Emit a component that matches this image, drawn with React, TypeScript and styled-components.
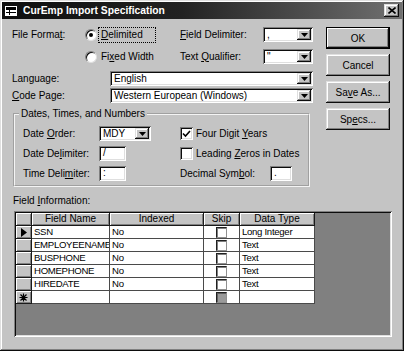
import React from 'react';
import styled, { createGlobalStyle } from 'styled-components';

const FACE = '#c4c4c4';
const SHADOW = '#808080';
const DARK = '#0c0c0c';
const LIGHT = '#dfdfdf';
const WHITE = '#ffffff';

const raised = `box-shadow: inset -1px -1px ${DARK}, inset 1px 1px ${LIGHT}, inset -2px -2px ${SHADOW}, inset 2px 2px ${WHITE};`;
const sunken = `box-shadow: inset 1px 1px ${SHADOW}, inset -1px -1px ${WHITE}, inset 2px 2px ${DARK}, inset -2px -2px ${LIGHT};`;

const GlobalStyle = createGlobalStyle`
  html, body {
    margin: 0;
    padding: 0;
    background: ${FACE};
  }
  body {
    font-family: "Liberation Sans", Arial, sans-serif;
    font-size: 10px;
    color: #000;
  }
  * {
    box-sizing: border-box;
  }
`;

const Window = styled.div`
  width: 404px;
  height: 351px;
  padding: 2px;
  background: ${FACE};
  display: flex;
  flex-direction: column;
  ${raised}
`;

const TitleBar = styled.div`
  height: 17px;
  display: flex;
  align-items: center;
  padding: 0 3px 0 3px;
  background: linear-gradient(to right, #0e0e0e 0%, #222 45%, #707070 100%);
  color: ${WHITE};
  font-weight: bold;
  font-size: 10.3px;
  gap: 6px;

  .title {
    flex: 1;
    white-space: nowrap;
  }
`;

const CloseButton = styled.div`
  width: 15px;
  height: 13px;
  background: ${FACE};
  display: flex;
  align-items: center;
  justify-content: center;
  ${raised}
`;

const Body = styled.div`
  flex: 1;
  display: flex;
  flex-direction: column;
  padding: 8px 10px 0 10px;
`;

const TopArea = styled.div`
  display: flex;
  justify-content: space-between;
  align-items: flex-start;
`;

const LeftPanel = styled.div`
  width: 301px;
  display: flex;
  flex-direction: column;
`;

const FormatGrid = styled.div`
  display: grid;
  grid-template-columns: 73px 95px 83px 50px;
  grid-auto-rows: 15px;
  row-gap: 7px;
  align-items: center;
`;

const Label = styled.span`
  white-space: nowrap;
  line-height: 12px;
`;

const RadioRow = styled.div`
  display: flex;
  align-items: center;
`;

const RadioCircle = styled.span<{ checked?: boolean }>`
  width: 12px;
  height: 12px;
  border-radius: 50%;
  background: ${WHITE};
  border: 1px solid ${SHADOW};
  border-right-color: ${LIGHT};
  border-bottom-color: ${LIGHT};
  box-shadow: inset 1px 1px ${DARK};
  display: flex;
  align-items: center;
  justify-content: center;
  flex-shrink: 0;

  &::after {
    content: '';
    width: 4px;
    height: 4px;
    border-radius: 50%;
    background: ${p => (p.checked ? '#000' : 'transparent')};
  }
`;

const RadioText = styled.span<{ focused?: boolean }>`
  margin-left: 1px;
  padding: 1px 12px 1px 2px;
  line-height: 12px;
  border: 1px dotted ${p => (p.focused ? '#000' : 'transparent')};
  white-space: nowrap;
`;

const ComboBox = styled.div<{ width?: number }>`
  width: ${p => (p.width ? `${p.width}px` : '100%')};
  height: 15px;
  background: ${WHITE};
  display: flex;
  align-items: center;
  padding: 2px;
  ${sunken}

  .value {
    flex: 1;
    padding-left: 2px;
    line-height: 11px;
    white-space: nowrap;
    overflow: hidden;
  }
`;

const DropButton = styled.div`
  width: 14px;
  height: 11px;
  background: ${FACE};
  display: flex;
  align-items: center;
  justify-content: center;
  ${raised}
`;

const TextBox = styled.div<{ width: number }>`
  width: ${p => p.width}px;
  height: 15px;
  background: ${WHITE};
  padding: 1px 4px;
  line-height: 12px;
  ${sunken}
`;

const FieldRow = styled.div<{ top: number }>`
  display: grid;
  grid-template-columns: 98px 203px;
  height: 15px;
  align-items: center;
  margin-top: ${p => p.top}px;
`;

const GroupBox = styled.fieldset`
  margin: 5px 0 0 1px;
  width: 297px;
  padding: 0 8px 4px 8px;
  border: 2px groove #f4f4f4;

  legend {
    margin-left: -4px;
    padding: 0 2px;
    line-height: 12px;
  }
`;

const GroupGrid = styled.div`
  margin-top: 6px;
  display: grid;
  grid-template-columns: 76px 81px 1fr;
  grid-auto-rows: 15px;
  row-gap: 5px;
  align-items: center;
`;

const CheckRow = styled.div`
  display: flex;
  align-items: center;
  gap: 3px;
`;

const CheckBox = styled.span`
  width: 13px;
  height: 13px;
  background: ${WHITE};
  display: flex;
  align-items: center;
  justify-content: center;
  flex-shrink: 0;
  ${sunken}
`;

const DecimalRow = styled.div`
  display: flex;
  align-items: center;

  ${Label} {
    width: 90px;
  }
`;

const ButtonColumn = styled.div`
  display: flex;
  flex-direction: column;
  gap: 5px;
  margin-right: 2px;
`;

const PushButton = styled.div<{ isDefault?: boolean }>`
  width: 64px;
  height: 22px;
  background: ${FACE};
  display: flex;
  align-items: center;
  justify-content: center;
  ${p =>
    p.isDefault
      ? `border: 1px solid #000; box-shadow: inset -1px -1px ${DARK}, inset 1px 1px ${WHITE}, inset -2px -2px ${SHADOW};`
      : raised}
`;

const SectionLabel = styled.div`
  margin: 8px 0 4px 1px;
  line-height: 12px;
`;

const DataSheet = styled.div`
  margin-left: 2px;
  width: 378px;
  height: 126px;
  padding: 2px;
  background: ${SHADOW};
  ${sunken}
`;

const SheetGrid = styled.div`
  display: grid;
  grid-template-columns: 16px 78px 94px 36px 75px;
  grid-auto-rows: 13px;
  width: fit-content;
`;

const HeaderCell = styled.div`
  background: ${FACE};
  display: flex;
  align-items: center;
  justify-content: center;
  line-height: 12px;
  border-right: 1px solid #1a1a1a;
  border-bottom: 1px solid #1a1a1a;
  box-shadow: inset 1px 1px ${WHITE}, inset -1px -1px ${SHADOW};
`;

const SelectorCell = styled(HeaderCell)``;

const DataCell = styled.div<{ center?: boolean }>`
  background: ${WHITE};
  display: flex;
  align-items: center;
  justify-content: ${p => (p.center ? 'center' : 'flex-start')};
  padding-left: ${p => (p.center ? 0 : 2)}px;
  font-size: 9.6px;
  letter-spacing: -0.3px;
  line-height: 12px;
  white-space: nowrap;
  overflow: hidden;
  border-right: 1px solid #4a4a4a;
  border-bottom: 1px solid #4a4a4a;
`;

const SkipBox = styled.span<{ disabled?: boolean }>`
  width: 11px;
  height: 11px;
  border: 1px solid #202020;
  border-right-color: #909090;
  border-bottom-color: #909090;
  background: ${p => (p.disabled ? '#9a9a9a' : WHITE)};
  box-shadow: ${p => (p.disabled ? 'inset 1px 1px #606060' : 'inset 1px 1px #808080')};
`;

const U = styled.span`
  text-decoration: underline;
`;

const Arrow = () => (
  <svg width="7" height="4" viewBox="0 0 7 4">
    <path d="M0 0H7L3.5 4Z" fill="#000" />
  </svg>
);

const Check = () => (
  <svg width="9" height="8" viewBox="0 0 9 8">
    <path d="M1 3.5L3.5 6L8 1" stroke="#000" strokeWidth="1.6" fill="none" />
  </svg>
);

const Combo = ({ value, width }: { value: string; width?: number }) => (
  <ComboBox width={width}>
    <span className="value">{value}</span>
    <DropButton>
      <Arrow />
    </DropButton>
  </ComboBox>
);

interface Field {
  name: string;
  indexed: string;
  type: string;
}

const fields: Field[] = [
  { name: 'SSN', indexed: 'No', type: 'Long Integer' },
  { name: 'EMPLOYEENAME', indexed: 'No', type: 'Text' },
  { name: 'BUSPHONE', indexed: 'No', type: 'Text' },
  { name: 'HOMEPHONE', indexed: 'No', type: 'Text' },
  { name: 'HIREDATE', indexed: 'No', type: 'Text' },
];

const App = () => {
  return (
    <>
      <GlobalStyle />
      <Window>
        <TitleBar>
          <svg width="12" height="10" viewBox="0 0 12 10">
            <rect x="0.5" y="0.5" width="11" height="9" fill="#fff" stroke="#fff" />
            <path d="M1 3.5H11M1 6.5H11M4.5 1V9" stroke="#000" strokeWidth="1" />
            <rect x="1" y="1" width="10" height="2" fill="#000" />
          </svg>
          <span className="title">CurEmp Import Specification</span>
          <CloseButton>
            <svg width="8" height="7" viewBox="0 0 8 7">
              <path d="M0.5 0.5L7.5 6.5M7.5 0.5L0.5 6.5" stroke="#000" strokeWidth="1.6" />
            </svg>
          </CloseButton>
        </TitleBar>

        <Body>
          <TopArea>
            <LeftPanel>
              <FormatGrid>
                <Label>File Forma<U>t</U>:</Label>
                <RadioRow>
                  <RadioCircle checked />
                  <RadioText focused><U>D</U>elimited</RadioText>
                </RadioRow>
                <Label><U>F</U>ield Delimiter:</Label>
                <Combo value="," />

                <Label />
                <RadioRow>
                  <RadioCircle />
                  <RadioText>Fi<U>x</U>ed Width</RadioText>
                </RadioRow>
                <Label>Text <U>Q</U>ualifier:</Label>
                <Combo value={'"'} />
              </FormatGrid>

              <FieldRow top={7}>
                <Label>Language:</Label>
                <Combo value="English" />
              </FieldRow>
              <FieldRow top={2}>
                <Label><U>C</U>ode Page:</Label>
                <Combo value="Western European (Windows)" />
              </FieldRow>

              <GroupBox>
                <legend>Dates, Times, and Numbers</legend>
                <GroupGrid>
                  <Label>Date <U>O</U>rder:</Label>
                  <Combo value="MDY" width={52} />
                  <CheckRow>
                    <CheckBox>
                      <Check />
                    </CheckBox>
                    <Label>Four Digit <U>Y</U>ears</Label>
                  </CheckRow>

                  <Label>Date De<U>l</U>imiter:</Label>
                  <TextBox width={27}>/</TextBox>
                  <CheckRow>
                    <CheckBox />
                    <Label>Leading <U>Z</U>eros in Dates</Label>
                  </CheckRow>

                  <Label>Time Deli<U>m</U>iter:</Label>
                  <TextBox width={27}>:</TextBox>
                  <DecimalRow>
                    <Label>Decimal Sym<U>b</U>ol:</Label>
                    <TextBox width={22}>.</TextBox>
                  </DecimalRow>
                </GroupGrid>
              </GroupBox>
            </LeftPanel>

            <ButtonColumn>
              <PushButton isDefault>OK</PushButton>
              <PushButton>Cancel</PushButton>
              <PushButton>Sa<U>v</U>e As...</PushButton>
              <PushButton>Sp<U>e</U>cs...</PushButton>
            </ButtonColumn>
          </TopArea>

          <SectionLabel>Field <U>I</U>nformation:</SectionLabel>

          <DataSheet>
            <SheetGrid>
              <HeaderCell />
              <HeaderCell>Field Name</HeaderCell>
              <HeaderCell>Indexed</HeaderCell>
              <HeaderCell>Skip</HeaderCell>
              <HeaderCell>Data Type</HeaderCell>

              {fields.map((f, i) => (
                <React.Fragment key={f.name}>
                  <SelectorCell>
                    {i === 0 && (
                      <svg width="6" height="9" viewBox="0 0 6 9">
                        <path d="M0 0L6 4.5L0 9Z" fill="#000" />
                      </svg>
                    )}
                  </SelectorCell>
                  <DataCell>{f.name}</DataCell>
                  <DataCell>{f.indexed}</DataCell>
                  <DataCell center>
                    <SkipBox />
                  </DataCell>
                  <DataCell>{f.type}</DataCell>
                </React.Fragment>
              ))}

              <SelectorCell>
                <svg width="9" height="9" viewBox="0 0 9 9">
                  <path d="M4.5 0.5V8.5M0.5 4.5H8.5M1.5 1.5L7.5 7.5M7.5 1.5L1.5 7.5" stroke="#000" strokeWidth="1.2" />
                </svg>
              </SelectorCell>
              <DataCell />
              <DataCell />
              <DataCell center>
                <SkipBox disabled />
              </DataCell>
              <DataCell />
            </SheetGrid>
          </DataSheet>
        </Body>
      </Window>
    </>
  );
};

export default App;
